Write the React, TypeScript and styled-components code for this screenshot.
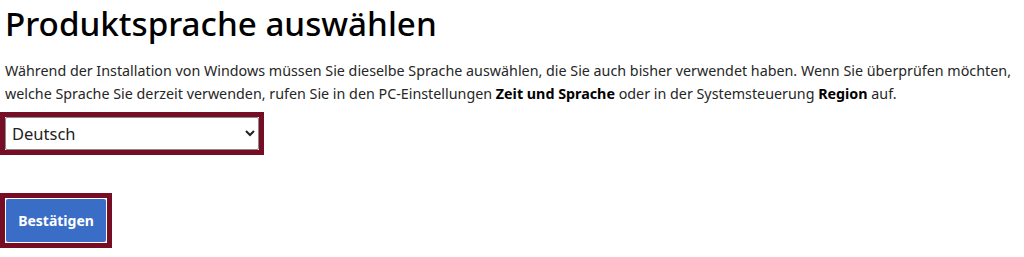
import styled, { createGlobalStyle } from "styled-components";

const GlobalStyle = createGlobalStyle`
  body {
    margin: 0;
    background: #ffffff;
    font-family: "Noto Sans", "Open Sans", sans-serif;
    color: #1b1b1b;
  }
`;

const Page = styled.div`
  display: flex;
  flex-direction: column;
  align-items: flex-start;
  padding: 0 0 0 5px;
`;

const Title = styled.h1`
  margin: 0;
  padding-top: 1px;
  font-size: 33.2px;
  font-weight: 500;
  line-height: 46px;
  color: #000;
`;

const Text = styled.p`
  margin: 12px 0 0;
  font-size: 14.3px;
  line-height: 23px;
  color: #262626;
  b {
    font-weight: 700;
    color: #000;
  }
`;

const Highlight = styled.div<{ $top: number; $pad: number }>`
  margin: ${(p) => p.$top}px 0 0 -5px;
  padding: ${(p) => p.$pad}px;
  box-shadow: inset 0 0 0 5px #770d24;
  display: flex;
`;

const Select = styled.select`
  width: 254px;
  height: 33px;
  font-family: inherit;
  font-size: 16.5px;
  color: #222;
  padding: 0 2px;
  border: 1px solid #8a8a8a;
  border-radius: 2px;
  background: #fff;
`;

const Button = styled.button`
  width: 100px;
  height: 43px;
  border: 0;
  border-radius: 2px;
  background: #3a6ec6;
  color: #fff;
  font-family: inherit;
  font-size: 14px;
  font-weight: 700;
  cursor: pointer;
`;

export default function App() {
  return (
    <>
      <GlobalStyle />
      <Page>
        <Title>Produktsprache auswählen</Title>
        <Text>
          Während der Installation von Windows müssen Sie dieselbe Sprache auswählen, die Sie auch bisher verwendet
          haben. Wenn Sie überprüfen möchten, welche Sprache Sie derzeit verwenden, rufen Sie in den PC-Einstellungen{" "}
          <b>Zeit und Sprache</b> oder in der Systemsteuerung <b>Region</b> auf.
        </Text>
        <Highlight $top={7} $pad={5}>
          <Select defaultValue="de">
            <option value="de">Deutsch</option>
            <option value="en">English</option>
          </Select>
        </Highlight>
        <Highlight $top={38} $pad={6}>
          <Button>Bestätigen</Button>
        </Highlight>
      </Page>
    </>
  );
}
